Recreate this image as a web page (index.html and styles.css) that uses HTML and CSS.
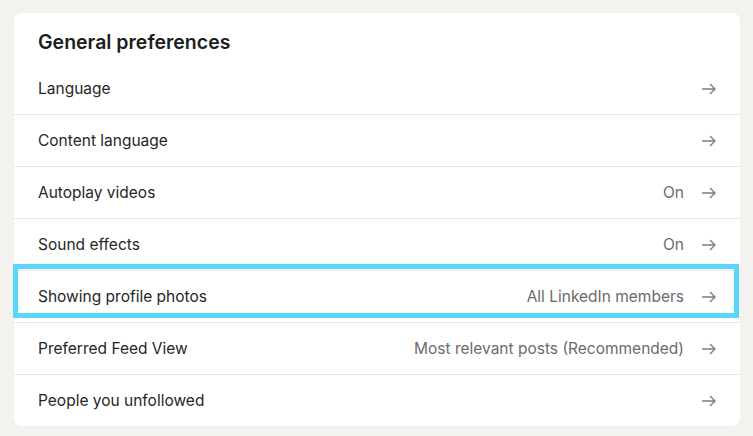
FILE: index.html
```html
<!DOCTYPE html>
<html>
<head>
<meta charset="utf-8">
<link rel="stylesheet" href="styles.css">
</head>
<body>
<section class="card">
  <h2 class="title">General preferences</h2>
  <ul class="list">
    <li class="row"><span class="label">Language</span><span class="right"><svg class="arrow" viewBox="0 0 16 16"><path d="M0 8h13M8 3L13 8l-5 5"/></svg></span></li>
    <li class="row"><span class="label">Content language</span><span class="right"><svg class="arrow" viewBox="0 0 16 16"><path d="M0 8h13M8 3L13 8l-5 5"/></svg></span></li>
    <li class="row"><span class="label">Autoplay videos</span><span class="right"><span class="value">On</span><svg class="arrow" viewBox="0 0 16 16"><path d="M0 8h13M8 3L13 8l-5 5"/></svg></span></li>
    <li class="row"><span class="label">Sound effects</span><span class="right"><span class="value">On</span><svg class="arrow" viewBox="0 0 16 16"><path d="M0 8h13M8 3L13 8l-5 5"/></svg></span></li>
    <li class="row highlighted"><span class="label">Showing profile photos</span><span class="right"><span class="value">All LinkedIn members</span><svg class="arrow" viewBox="0 0 16 16"><path d="M0 8h13M8 3L13 8l-5 5"/></svg></span><span class="focus-ring"></span></li>
    <li class="row"><span class="label">Preferred Feed View</span><span class="right"><span class="value">Most relevant posts (Recommended)</span><svg class="arrow" viewBox="0 0 16 16"><path d="M0 8h13M8 3L13 8l-5 5"/></svg></span></li>
    <li class="row"><span class="label">People you unfollowed</span><span class="right"><svg class="arrow" viewBox="0 0 16 16"><path d="M0 8h13M8 3L13 8l-5 5"/></svg></span></li>
  </ul>
</section>
</body>
</html>
```
FILE: styles.css
```css
html, body {
  margin: 0;
  padding: 0;
  background: #f3f2ef;
  font-family: Inter, "Noto Sans", "Liberation Sans", sans-serif;
}
body {
  padding: 13px 13px 0 14px;
}
.card {
  background: #ffffff;
  border-radius: 8px;
  width: 726px;
}
.title {
  margin: 0;
  padding: 18px 24px 10px;
  font-size: 19.5px;
  line-height: 22px;
  font-weight: 600;
  color: #1d1d1d;
}
.list {
  list-style: none;
  margin: 0;
  padding: 0;
}
.row {
  position: relative;
  display: flex;
  align-items: center;
  justify-content: space-between;
  height: 51px;
  padding: 0 22px 0 24px;
  border-bottom: 1px solid #e8e8e8;
  font-size: 15.5px;
  color: #262626;
}
.row:last-child {
  border-bottom: none;
  height: 51px;
}
.right {
  display: flex;
  align-items: center;
  gap: 18px;
}
.value {
  color: #6b6b6b;
}
.arrow {
  width: 16px;
  height: 16px;
  fill: none;
  stroke: #7e7e7e;
  stroke-width: 1.4;
}
.focus-ring {
  position: absolute;
  top: -7px;
  left: -1px;
  width: 726px;
  height: 54px;
  box-sizing: border-box;
  border: 5px solid #58d6fc;
  pointer-events: none;
}
```
